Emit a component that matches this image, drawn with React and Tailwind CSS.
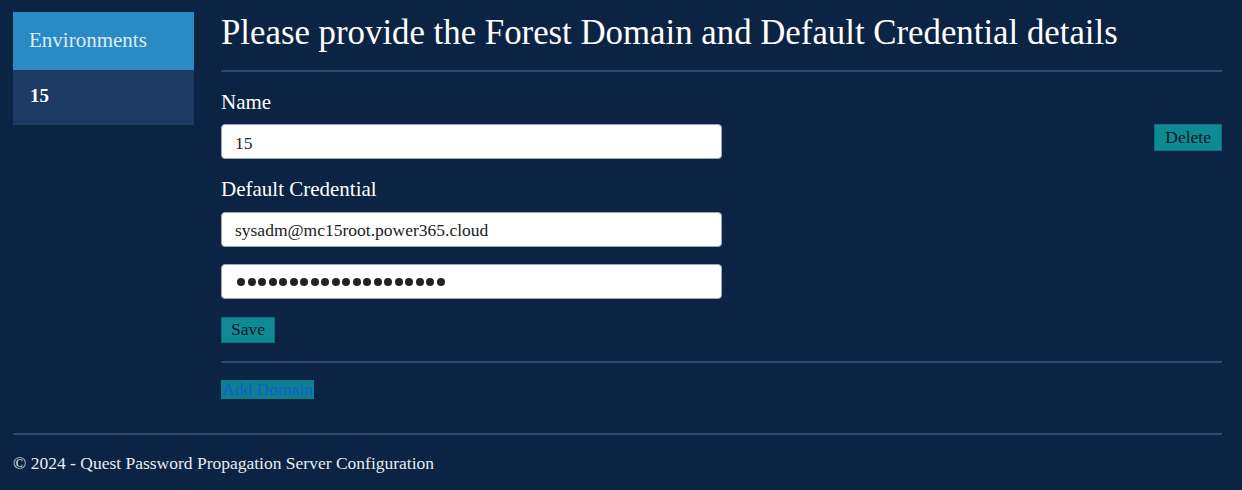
export default function App() {
  const serif = { fontFamily: '"Liberation Serif", "Times New Roman", serif' };
  return (
    <div className="w-[1242px] h-[490px] bg-[#0b2443] text-white overflow-hidden" style={serif}>
      <div className="pl-[13px] pr-[20px] pt-[12px]">
        <div className="flex gap-[27px]">
          <div className="w-[181px] shrink-0 flex flex-col">
            <div className="h-[58px] bg-[#2a8bc4] text-[#dceaf5] text-[21px] flex items-center pl-[16px]">Environments</div>
            <div className="h-[55px] bg-[#1c3a64] text-white text-[19px] font-bold flex items-center pl-[17px] pb-[2px]">15</div>
          </div>
          <div className="flex-1 min-w-0">
            <h1 className="text-[34.8px] leading-[40px] mt-[1px] text-white">Please provide the Forest Domain and Default Credential details</h1>
            <div className="h-[2px] bg-[#2c4a6e] mt-[17px]" />
            <div className="text-[21px] leading-[22px] mt-[19px]">Name</div>
            <div className="flex items-start justify-between mt-[11px]">
              <div className="w-[501px] h-[35px] bg-white rounded-[4px] border border-[#9aa8b8] text-[#222] text-[17.5px] flex items-center pl-[13px] pt-[3px]">15</div>
              <button className="h-[27px] px-[10px] bg-[#0e8a94] border border-[#0b6e78] text-[#06151f] text-[17.5px] leading-none">Delete</button>
            </div>
            <div className="text-[21px] leading-[22px] mt-[19px]">Default Credential</div>
            <div className="w-[501px] h-[35px] bg-white rounded-[4px] border border-[#9aa8b8] text-[#222] text-[17.5px] flex items-center pl-[13px] pt-[1px] mt-[12px]">sysadm@mc15root.power365.cloud</div>
            <div className="w-[501px] h-[35px] bg-white rounded-[4px] border border-[#9aa8b8] text-[#222] flex items-center pl-[15px] mt-[17px] gap-[2.5px]">
              {Array.from({ length: 20 }).map((_, i) => (
                <span key={i} className="w-[8px] h-[8px] rounded-full bg-[#222] inline-block" />
              ))}
            </div>
            <button className="mt-[18px] h-[26px] px-[9px] bg-[#0e8a94] border border-[#0b6e78] text-[#06151f] text-[17.5px] leading-none block">Save</button>
            <div className="h-[2px] bg-[#2c4a6e] mt-[18px]" />
            <div className="mt-[17px] inline-block h-[19px] px-[1px] bg-[#0e7f8f] text-[#0a5fd0] text-[17.5px] leading-[19px]">Add Domain</div>
          </div>
        </div>
        <div className="h-[2px] bg-[#2c4a6e] mt-[31px]" />
        <div className="text-[17.5px] leading-[20px] mt-[18px] text-[#e6ecf3]">© 2024 - Quest Password Propagation Server Configuration</div>
      </div>
    </div>
  );
}
